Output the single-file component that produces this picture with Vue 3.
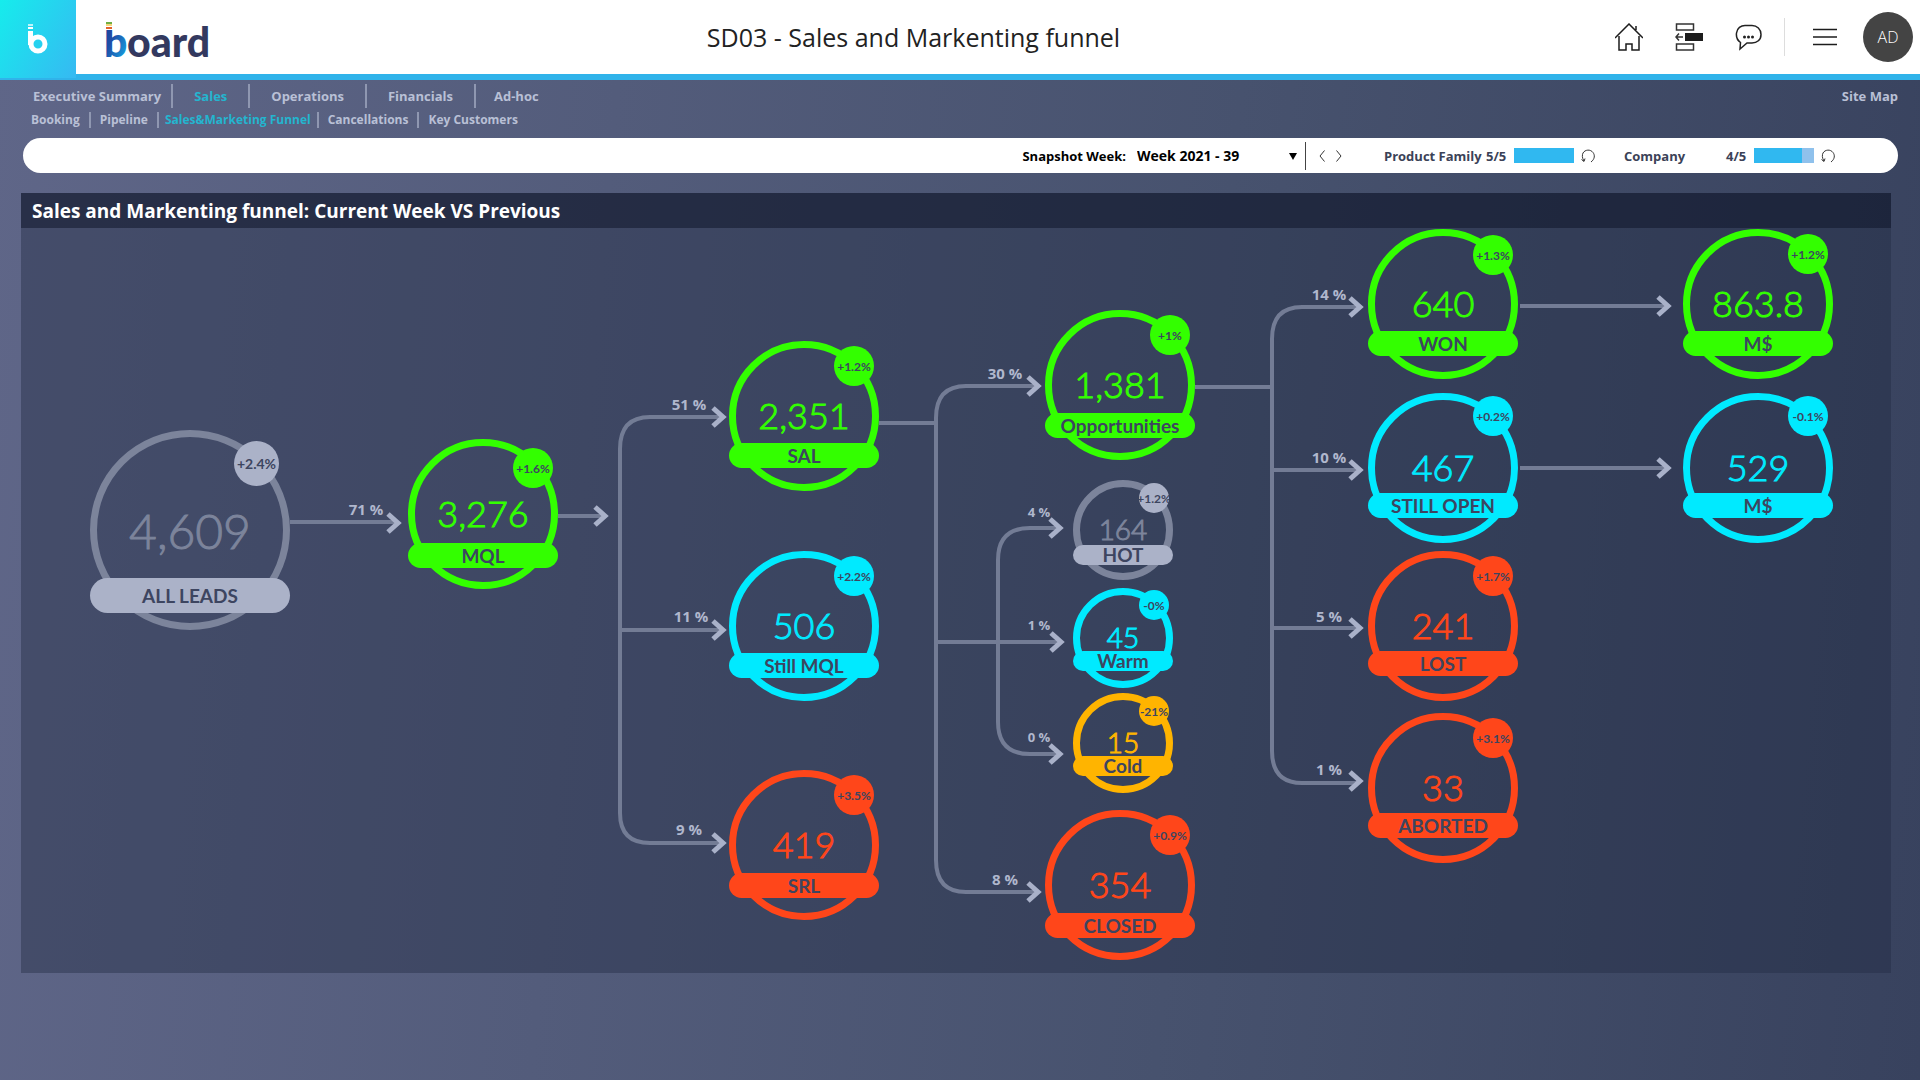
<script setup>
import { ref } from 'vue'

const areas = ['Executive Summary', 'Sales', 'Operations', 'Financials', 'Ad-hoc']
const screens = ['Booking', 'Pipeline', 'Sales&Marketing Funnel', 'Cancellations', 'Key Customers']
const week = ref('Week 2021 - 39')

const filters = [
  { name: 'Product Family', picked: 5, total: 5 },
  { name: 'Company', picked: 4, total: 5 },
]

const sizes = {
  l: { d: 200, band: 35, badge: 45, numY: 119, badgeX: 144 },
  m: { d: 150, band: 25, badge: 40, numY: 88, badgeX: 105 },
  s: { d: 100, band: 20, badge: 30, numY: 60, badgeX: 66 },
}

const nodes = [
  { size: 'l', tone: 'grey', x: 90, y: 430, bandY: 148, badgeY: 11, value: '4,609', label: 'ALL LEADS', delta: '+2.4%' },
  { size: 'm', tone: 'green', x: 408, y: 439, bandY: 104, badgeY: 9, value: '3,276', label: 'MQL', delta: '+1.6%' },
  { size: 'm', tone: 'green', x: 729, y: 341, bandY: 102, badgeY: 5, value: '2,351', label: 'SAL', delta: '+1.2%' },
  { size: 'm', tone: 'cyan', x: 729, y: 551, bandY: 102, badgeY: 5, value: '506', label: 'Still MQL', delta: '+2.2%' },
  { size: 'm', tone: 'red', x: 729, y: 770, bandY: 103, badgeY: 5, value: '419', label: 'SRL', delta: '+3.5%' },
  { size: 'm', tone: 'green', x: 1045, y: 310, bandY: 103, badgeY: 5, value: '1,381', label: 'Opportunities', delta: '+1%' },
  { size: 's', tone: 'grey', x: 1073, y: 480, bandY: 65, badgeY: 3, value: '164', label: 'HOT', delta: '+1.2%' },
  { size: 's', tone: 'cyan', x: 1073, y: 588, bandY: 63, badgeY: 2, value: '45', label: 'Warm', delta: '-0%' },
  { size: 's', tone: 'amber', x: 1073, y: 693, bandY: 63, badgeY: 3, value: '15', label: 'Cold', delta: '-21%' },
  { size: 'm', tone: 'red', x: 1045, y: 810, bandY: 103, badgeY: 5, value: '354', label: 'CLOSED', delta: '+0.9%' },
  { size: 'm', tone: 'green', x: 1368, y: 229, bandY: 102, badgeY: 6, value: '640', label: 'WON', delta: '+1.3%' },
  { size: 'm', tone: 'cyan', x: 1368, y: 393, bandY: 100, badgeY: 3, value: '467', label: 'STILL OPEN', delta: '+0.2%' },
  { size: 'm', tone: 'red', x: 1368, y: 551, bandY: 100, badgeY: 5, value: '241', label: 'LOST', delta: '+1.7%' },
  { size: 'm', tone: 'red', x: 1368, y: 713, bandY: 100, badgeY: 5, value: '33', label: 'ABORTED', delta: '+3.1%' },
  { size: 'm', tone: 'green', x: 1683, y: 229, bandY: 102, badgeY: 5, value: '863.8', label: 'M$', delta: '+1.2%' },
  { size: 'm', tone: 'cyan', x: 1683, y: 393, bandY: 100, badgeY: 3, value: '529', label: 'M$', delta: '-0.1%' },
].map((n) => ({ ...n, s: sizes[n.size] }))

const lines = [
  'M290 522H398',
  'M558 516H605',
  'M722 417H650Q620 417 620 449V813Q620 843 650 843H722',
  'M622 630H722',
  'M879 423H934',
  'M1037 386H966Q936 386 936 418V860Q936 892 966 892H1037',
  'M938 642H1060',
  'M1058 528H1030Q998 528 998 560V722Q998 754 1030 754H1058',
  'M1195 387H1270',
  'M1358 307H1302Q1272 307 1272 339V751Q1272 783 1302 783H1358',
  'M1274 470H1358',
  'M1274 628H1358',
  'M1520 306H1667',
  'M1520 468H1667',
]

const tips = [
  [401, 523], [608, 516], [726, 417], [726, 630], [726, 843],
  [1041, 386], [1041, 892], [1063, 528], [1064, 642], [1063, 754],
  [1363, 307], [1363, 470], [1363, 628], [1363, 781], [1671, 306], [1671, 468],
]

const rates = [
  { x: 366, y: 515, text: '71 %' },
  { x: 689, y: 410, text: '51 %' },
  { x: 691, y: 622, text: '11 %' },
  { x: 689, y: 835, text: '9 %' },
  { x: 1005, y: 379, text: '30 %' },
  { x: 1005, y: 885, text: '8 %' },
  { x: 1039, y: 517, text: '4 %', small: true },
  { x: 1039, y: 630, text: '1 %', small: true },
  { x: 1039, y: 742, text: '0 %', small: true },
  { x: 1329, y: 300, text: '14 %' },
  { x: 1329, y: 463, text: '10 %' },
  { x: 1329, y: 622, text: '5 %' },
  { x: 1329, y: 775, text: '1 %' },
]
</script>

<template>
  <div class="app">
    <header class="topbar">
      <a class="mark" href="#" aria-label="Home">
        <svg width="20" height="32" viewBox="0 0 20 32">
          <g fill="#fff">
            <rect x="0" y="1" width="5" height="2" opacity=".7" />
            <rect x="0" y="4" width="5" height="2" />
            <rect x="0" y="8" width="5" height="14" />
          </g>
          <circle cx="10" cy="21" r="7" fill="none" stroke="#fff" stroke-width="5" />
        </svg>
      </a>
      <svg class="wordmark" width="112" height="56" viewBox="0 0 112 56">
        <defs>
          <linearGradient id="ink" x1="0" y1="0" x2="1" y2="1">
            <stop offset="0" stop-color="#1f3a93" />
            <stop offset="0.4" stop-color="#1f4fa8" />
            <stop offset="1" stop-color="#12b5ee" />
          </linearGradient>
        </defs>
        <text x="0" y="48" class="word" fill="url(#ink)">b</text>
        <text x="23" y="48" class="word" fill="#33395f">oard</text>
        <rect x="0" y="13" width="12" height="8" fill="#fff" />
        <rect x="2" y="13" width="6" height="2" fill="#6fae45" />
        <rect x="2" y="15" width="6" height="2" fill="#f3d67a" />
        <rect x="2" y="18" width="6" height="2" fill="#e2622c" />
      </svg>
      <h1>SD03 - Sales and Markenting funnel</h1>
      <div class="tools">
        <button type="button" aria-label="Home page">
          <svg width="28" height="28" viewBox="0 0 28 28" fill="none" stroke="#1c1c1c" stroke-width="1.5">
            <path d="M0 15L14 1L28 15M21 7V3M4 13V27H11V21H17V27H24V13" />
          </svg>
        </button>
        <button type="button" aria-label="Layout">
          <svg width="28" height="28" viewBox="0 0 28 28" fill="none" stroke="#333" stroke-width="1.5">
            <rect x="1.5" y="1" width="17" height="6" />
            <rect x="1.5" y="21" width="17" height="6" />
            <rect x="10" y="10" width="18" height="8" fill="#1c1c1c" stroke="none" />
            <path d="M8 14H1M4 10.5L1 14L4 17.5" />
          </svg>
        </button>
        <button type="button" aria-label="Comments">
          <svg width="28" height="28" viewBox="0 0 28 28" fill="none" stroke="#222" stroke-width="1.5">
            <path d="M5 26L5.5 19.5C2 17 1 14 1.5 10C2 5 6 2.500 10 2.500H17C22 2.500 26 6 26 11.500C26 17 22 20 17 20H12Z" />
            <g fill="#222" stroke="none">
              <circle cx="9.500" cy="14" r="1.500" /><circle cx="13.500" cy="14" r="1.500" /><circle cx="17.500" cy="14" r="1.500" />
            </g>
          </svg>
        </button>
        <span class="rule"></span>
        <button type="button" class="menu" aria-label="Menu">
          <svg width="24" height="18" viewBox="0 0 24 18" stroke="#1c1c1c" stroke-width="1.5">
            <path d="M0 1.500H24M0 9H24M0 16.500H24" />
          </svg>
        </button>
        <button type="button" class="avatar">AD</button>
      </div>
    </header>

    <div class="navs">
      <nav class="areas" aria-label="Areas">
        <a v-for="a in areas" :key="a" href="#" :class="{ on: a === 'Sales' }">{{ a }}</a>
      </nav>
      <a class="sitemap" href="#">Site Map</a>
    </div>
    <nav class="screens" aria-label="Screens">
      <a v-for="s in screens" :key="s" href="#" :class="{ on: s === 'Sales&Marketing Funnel' }">{{ s }}</a>
    </nav>

    <section class="filters">
      <label for="week">Snapshot Week:</label>
      <div class="pick">
        <select id="week" v-model="week">
          <option>Week 2021 - 39</option>
        </select>
        <svg width="8" height="8" viewBox="0 0 8 8"><path d="M0 1H8L4 8Z" /></svg>
      </div>
      <div class="steps">
        <button type="button" aria-label="Previous week">
          <svg width="6" height="12" viewBox="0 0 6 12"><path d="M5.5 0.5L1 6L5.5 11.5" /></svg>
        </button>
        <button type="button" aria-label="Next week">
          <svg width="6" height="12" viewBox="0 0 6 12"><path d="M0.5 0.5L5 6L0.5 11.5" /></svg>
        </button>
      </div>
      <div v-for="f in filters" :key="f.name" class="filter">
        <span class="name">{{ f.name }}</span>
        <span class="count">{{ f.picked }}/{{ f.total }}</span>
        <span class="meter"><span :style="{ width: (f.picked / f.total) * 100 + '%' }"></span></span>
        <button type="button" :aria-label="'Reset ' + f.name">
          <svg width="14" height="14" viewBox="0 0 14 14"><path d="M10 13C14 10 14 6 12 3.5C9.5 0 4 0.5 2 4C1 6 1 9 3 12M0.5 10.5L3 12.5L4 9.5" /></svg>
        </button>
      </div>
    </section>

    <main class="panel">
      <h2>Sales and Markenting funnel: Current Week VS Previous</h2>
      <svg class="funnel" viewBox="21 228 1870 745" role="img" aria-label="Sales funnel">
        <g class="lines"><path v-for="l in lines" :key="l" :d="l" /></g>
        <g class="tips">
          <path v-for="(t, i) in tips" :key="i" :d="`M${t[0] - 13} ${t[1] - 9}L${t[0] - 3} ${t[1]}L${t[0] - 13} ${t[1] + 9}`" />
        </g>
        <text v-for="(r, i) in rates" :key="i" :x="r.x" :y="r.y" class="rate" :class="{ small: r.small }">{{ r.text }}</text>
        <g v-for="(n, i) in nodes" :key="i" :class="['node', n.size, n.tone]" :transform="`translate(${n.x} ${n.y})`">
          <circle class="ring" :cx="n.s.d / 2" :cy="n.s.d / 2" :r="n.s.d / 2 - 3.5" />
          <rect class="band" :y="n.bandY" :width="n.s.d" :height="n.s.band" :rx="n.s.band / 2" />
          <text class="value" :x="n.s.d / 2" :y="n.s.numY">{{ n.value }}</text>
          <text class="label" :x="n.s.d / 2" :y="n.bandY + n.s.band / 2 + 7">{{ n.label }}</text>
          <svg :x="n.s.badgeX" :y="n.badgeY" :width="n.s.badge" :height="n.s.badge">
            <circle class="badge" :cx="n.s.badge / 2" :cy="n.s.badge / 2" :r="n.s.badge / 2" />
            <text class="delta" :x="n.s.badge / 2" :y="n.s.badge / 2 + 5">{{ n.delta }}</text>
          </svg>
        </g>
      </svg>
    </main>
  </div>
</template>

<style>
body {
  margin: 0;
  background: #495370;
}
</style>

<style scoped>
.app {
  min-height: 100vh;
  background: linear-gradient(95deg, #5f6688 0%, #47526e 62%, #38425e 100%);
  font-family: "Open Sans", "Noto Sans", sans-serif;
}
a {
  text-decoration: none;
}
button {
  border: 0;
  padding: 0;
  background: none;
  font: inherit;
  display: flex;
  align-items: center;
  justify-content: center;
}
.topbar {
  display: flex;
  align-items: center;
  height: 74px;
  background: #fff;
  border-bottom: 6px solid #30b3ea;
}
.mark {
  align-self: flex-start;
  display: flex;
  align-items: center;
  justify-content: center;
  flex: none;
  width: 76px;
  height: 78px;
  background: linear-gradient(120deg, #16ecec, #36b9f2);
}
.wordmark {
  flex: none;
  margin-left: 28px;
  overflow: visible;
}
.word {
  font-family: Lato, sans-serif;
  font-size: 41px;
  font-weight: 900;
}
h1 {
  flex: 1;
  margin: 0;
  padding-right: 4px;
  text-align: center;
  font-size: 25px;
  line-height: 32px;
  font-weight: 400;
  color: #222;
}
.tools {
  display: flex;
  align-items: center;
  flex: none;
  gap: 32px;
  padding-right: 7px;
}
.rule {
  width: 1px;
  height: 38px;
  background: #ddd;
  margin-left: -11px;
}
.menu {
  margin-left: -4px;
}
.avatar {
  width: 50px;
  height: 50px;
  margin-left: -6px;
  border-radius: 50%;
  background: #444;
  color: #fff;
  font-size: 16px;
  font-weight: 300;
}
.navs {
  display: flex;
  justify-content: space-between;
  padding: 4px 22px 0 21px;
}
.areas,
.screens {
  display: flex;
}
.areas a,
.sitemap {
  line-height: 24px;
  font-size: 13px;
  font-weight: 700;
  color: #b9c0d6;
}
.areas a {
  padding: 0 21px;
}
.areas a + a,
.screens a + a {
  border-left: 2px solid #8f97b1;
}
.areas a:first-child {
  padding: 0 10px 0 12px;
}
.areas a:last-child {
  padding: 0 18px;
}
.screens {
  padding: 4px 22px 0;
}
.screens a {
  padding: 0 9px;
  line-height: 16px;
  font-size: 12px;
  font-weight: 700;
  color: #b9c0d6;
}
.areas a.on,
.screens a.on {
  color: #24b5cf;
}
.screens a.on {
  padding: 0 6px;
}
.filters {
  display: flex;
  align-items: center;
  justify-content: flex-end;
  height: 35px;
  margin: 10px 22px 0 23px;
  padding-right: 63px;
  border-radius: 18px;
  background: #fff;
  font-size: 13px;
  font-weight: 700;
  color: #000;
}
.pick {
  display: flex;
  align-items: center;
  width: 160px;
  margin-left: 11px;
}
.pick select {
  flex: 1;
  appearance: none;
  border: 0;
  padding: 0;
  background: none;
  font: inherit;
  font-size: 14px;
  color: inherit;
}
.steps {
  display: flex;
  align-items: center;
  gap: 11px;
  height: 28px;
  margin-left: 8px;
  padding-left: 13px;
  border-left: 1px solid #444;
}
.steps svg,
.filter button svg {
  fill: none;
  stroke: #333;
}
.filter {
  display: flex;
  align-items: center;
  margin-left: 42px;
  color: #3b4257;
}
.filter + .filter {
  margin-left: 29px;
}
.name {
  width: 102px;
}
.count {
  width: 22px;
}
.meter {
  width: 60px;
  height: 15px;
  margin: 0 7px 0 6px;
  background: #8fc1ec;
}
.meter span {
  display: block;
  height: 100%;
  background: #30b8f0;
}
.panel {
  margin: 20px 29px 0 21px;
  background: rgba(34, 44, 66, 0.42);
}
h2 {
  margin: 0;
  padding: 1px 0 0 11px;
  background: rgba(12, 18, 38, 0.5);
  color: #fff;
  font-size: 19px;
  line-height: 34px;
  font-weight: 700;
}
.funnel {
  display: block;
  width: 100%;
}
.lines {
  fill: none;
  stroke: #737c95;
  stroke-width: 4px;
}
.tips {
  fill: none;
  stroke: #a9b1c9;
  stroke-width: 5px;
}
.rate {
  fill: #b0b7cd;
  font-size: 15px;
  font-weight: 700;
  text-anchor: middle;
}
.rate.small {
  font-size: 13px;
}
.node {
  font-family: Lato, sans-serif;
  text-anchor: middle;
}
.ring {
  fill: none;
  stroke: currentColor;
  stroke-width: 7px;
}
.band,
.badge {
  fill: currentColor;
}
.value {
  fill: currentColor;
  stroke: currentColor;
  stroke-width: 1px;
  font-size: 36px;
  font-weight: 300;
}
.l .value {
  font-size: 48px;
}
.s .value {
  font-size: 28px;
}
.label {
  fill: #3d4560;
  font-size: 19px;
  font-weight: 700;
}
.delta {
  fill: #3d4560;
  font-size: 12px;
  font-weight: 700;
}
.l .delta {
  font-size: 14px;
}
.green {
  color: #33ff00;
}
.cyan {
  color: #00eaff;
}
.red {
  color: #ff461a;
}
.amber {
  color: #ffb400;
}
.grey {
  color: #abb2c8;
}
.grey .ring {
  stroke: #7c849b;
}
.grey .value {
  fill: #7c849b;
  stroke: #7c849b;
}
</style>
